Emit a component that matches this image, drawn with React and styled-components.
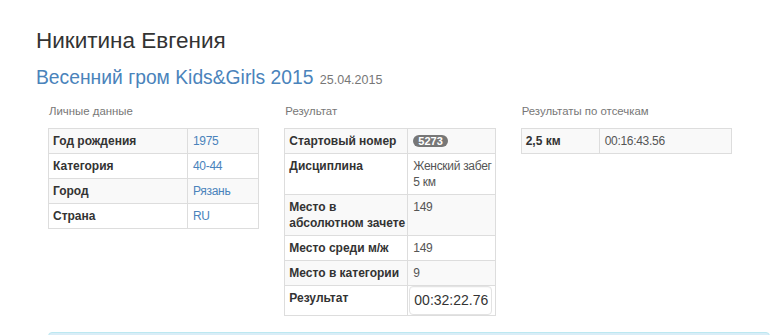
import styled, { createGlobalStyle } from 'styled-components';

const GlobalStyle = createGlobalStyle`
  body {
    margin: 0;
    background: #fff;
    font-family: 'Liberation Sans', Arial, sans-serif;
    color: #333;
  }
`;

const Page = styled.div`
  width: 770px;
  height: 335px;
  overflow: hidden;
  padding: 29px 0 0 36px;
  box-sizing: border-box;
`;

const Name = styled.h1`
  margin: 0;
  font-size: 22.5px;
  font-weight: normal;
  line-height: 24px;
  color: #333;
`;

const EventTitle = styled.h2`
  margin: 14px 0 0;
  font-size: 19.3px;
  font-weight: normal;
  line-height: 22px;
  color: #4a83bb;
`;

const EventDate = styled.small`
  font-size: 12.5px;
  color: #777;
  margin-left: 1px;
`;

const Columns = styled.div`
  display: grid;
  grid-template-columns: repeat(3, 1fr);
  column-gap: 25px;
  width: 684px;
  margin: 13px 0 0 12px;
  align-items: start;
`;

const Section = styled.div`
  display: flex;
  flex-direction: column;
`;

const SectionTitle = styled.div`
  font-size: 11.4px;
  line-height: 14px;
  color: #777;
  padding-left: 1px;
  margin-bottom: 10px;
`;

const Table = styled.table`
  width: 100%;
  table-layout: fixed;
  border-collapse: collapse;
  font-size: 12px;
  line-height: 16px;
  border: 1px solid #ddd;

  tr:nth-child(odd) td {
    background: #f9f9f9;
  }
`;

const Label = styled.td`
  box-sizing: border-box;
  width: ${(p) => p.$w}px;
  border: 1px solid #ddd;
  padding: 4px 2px 4px 4px;
  font-weight: bold;
  color: #333;
  vertical-align: top;
`;

const Value = styled.td`
  box-sizing: border-box;
  border: 1px solid #ddd;
  padding: ${(p) => (p.$tight ? '0 2px 0 1px' : '4px 1px 4px 5px')};
  letter-spacing: -0.3px;
  color: ${(p) => (p.$link ? '#4a83bb' : '#555')};
  vertical-align: top;
`;

const Badge = styled.span`
  display: inline-block;
  padding: 0 5px;
  height: 12px;
  line-height: 12px;
  font-size: 11px;
  font-weight: bold;
  letter-spacing: 0;
  color: #fff;
  background: #777;
  border-radius: 6px;
  margin-top: 2px;
  vertical-align: top;
`;

const ResultBox = styled.div`
  box-sizing: border-box;
  height: 29px;
  line-height: 27px;
  margin: 0 1px 0 0;
  padding: 0 0 0 4px;
  font-size: 14px;
  letter-spacing: 0;
  color: #333;
  border: 1px solid #e3e3e3;
  border-radius: 4px;
  background: #fff;
  box-shadow: inset 0 1px 1px rgba(0, 0, 0, 0.03);
`;

const Alert = styled.div`
  margin: 16px 0 0 12px;
  width: 720px;
  height: 40px;
  background: #d9edf7;
  border: 1px solid #bce8f1;
  border-radius: 4px;
`;

const personal = [
  ['Год рождения', '1975'],
  ['Категория', '40-44'],
  ['Город', 'Рязань'],
  ['Страна', 'RU'],
];

const result = [
  ['Стартовый номер', <Badge>5273</Badge>],
  ['Дисциплина', 'Женский забег 5 км'],
  ['Место в абсолютном зачете', '149'],
  ['Место среди м/ж', '149'],
  ['Место в категории', '9'],
];

export default function App() {
  return (
    <>
      <GlobalStyle />
      <Page>
        <Name>Никитина Евгения</Name>
        <EventTitle>
          Весенний гром Kids&amp;Girls 2015 <EventDate>25.04.2015</EventDate>
        </EventTitle>
        <Columns>
          <Section>
            <SectionTitle>Личные данные</SectionTitle>
            <Table>
              <tbody>
                {personal.map(([k, v]) => (
                  <tr key={k}>
                    <Label $w={139}>{k}</Label>
                    <Value $link>{v}</Value>
                  </tr>
                ))}
              </tbody>
            </Table>
          </Section>
          <Section>
            <SectionTitle>Результат</SectionTitle>
            <Table>
              <tbody>
                {result.map(([k, v]) => (
                  <tr key={k}>
                    <Label $w={123}>{k}</Label>
                    <Value>{v}</Value>
                  </tr>
                ))}
                <tr>
                  <Label $w={123}>Результат</Label>
                  <Value $tight><ResultBox>00:32:22.76</ResultBox></Value>
                </tr>
              </tbody>
            </Table>
          </Section>
          <Section>
            <SectionTitle>Результаты по отсечкам</SectionTitle>
            <Table>
              <tbody>
                <tr>
                  <Label $w={78}>2,5 км</Label>
                  <Value>00:16:43.56</Value>
                </tr>
              </tbody>
            </Table>
          </Section>
        </Columns>
        <Alert />
      </Page>
    </>
  );
}
